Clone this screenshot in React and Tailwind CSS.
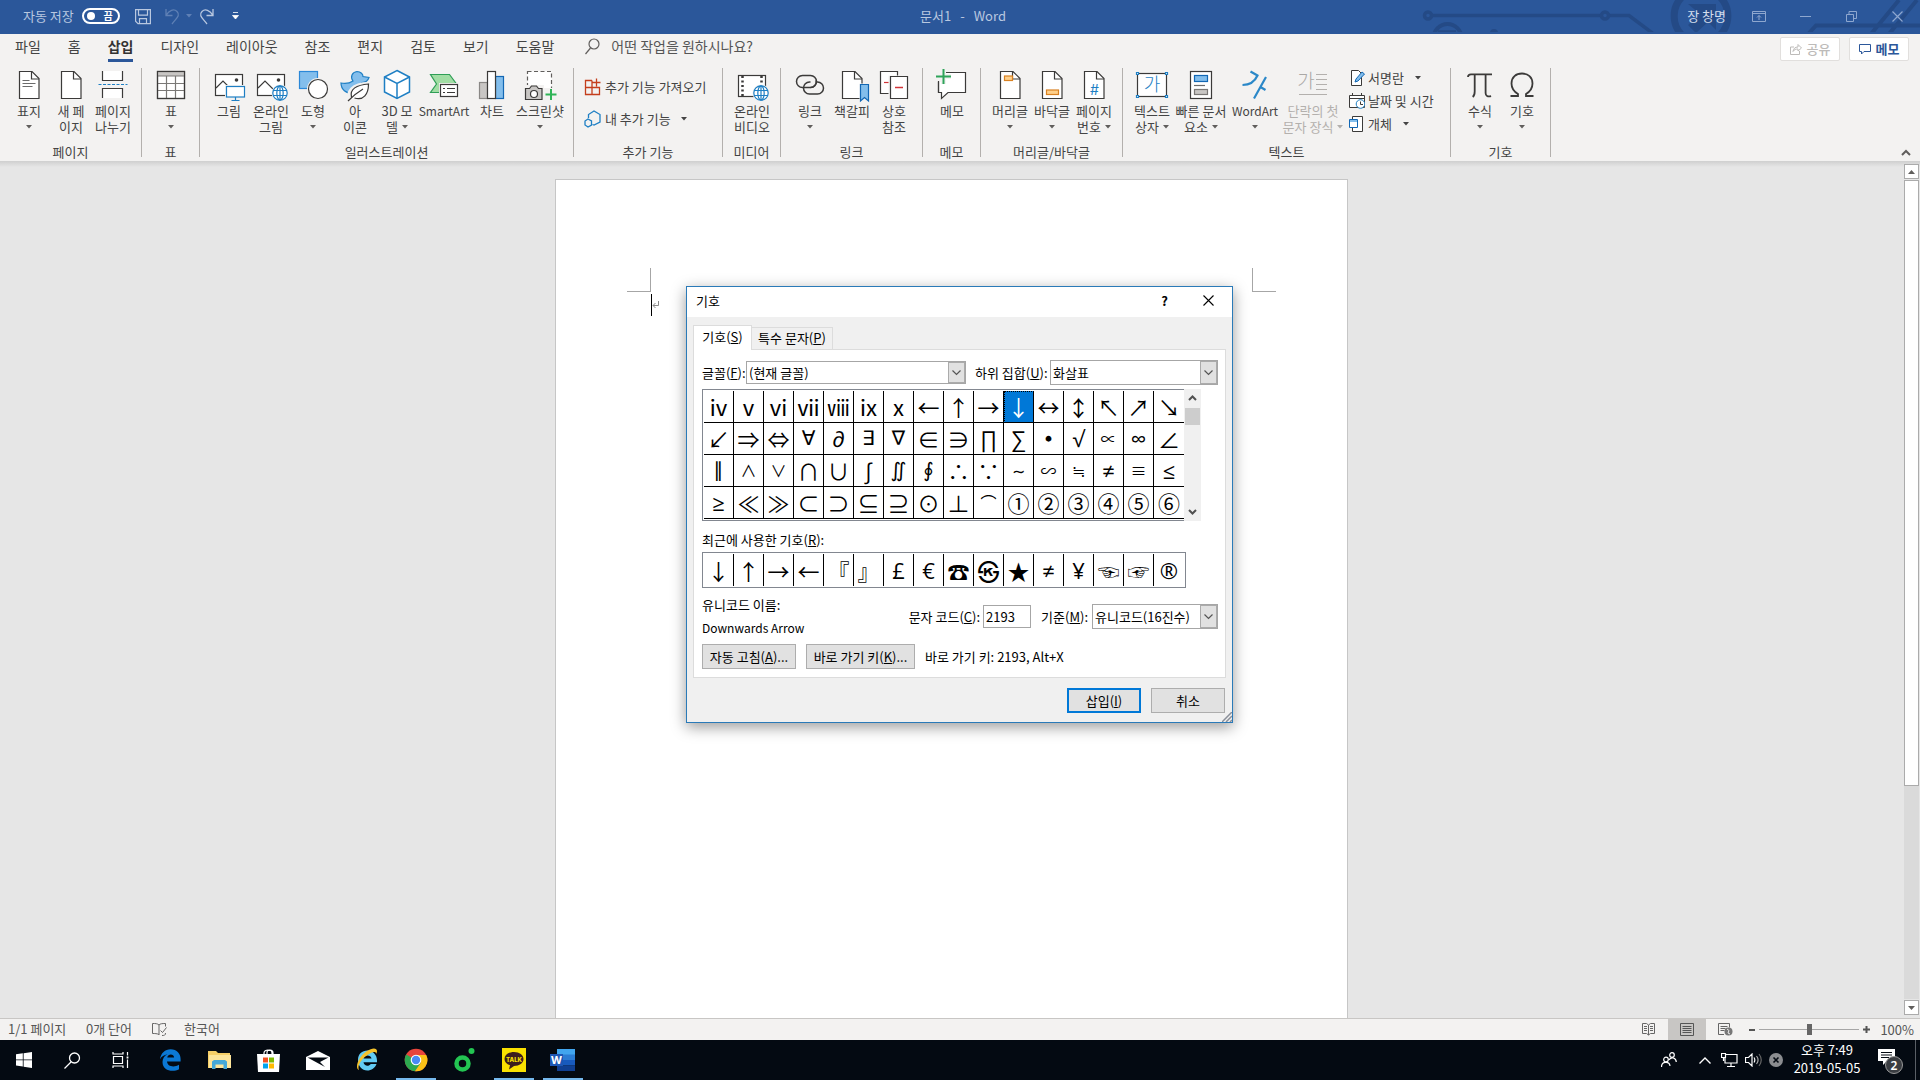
import React from "react";

const INK = "#3b3a39";
const BLUE = "#1e7fc4";

/* ---------- ribbon drawings, all on a 36 x 34 board ---------- */

function Board({ children }) {
  return (
    <svg width="36" height="34" viewBox="0 0 36 34" fill="none" stroke={INK} strokeWidth="1.2" className="shrink-0 overflow-visible" aria-hidden="true">
      {children}
    </svg>
  );
}

function Sheet() {
  return (
    <>
      <path d="M8.5 3.5h12.5l7 7v20H8.5z" fill="#fff" />
      <path d="M20.5 3.5v7.500h7.500" />
    </>
  );
}

function Globe({ x, y }) {
  return (
    <g transform={`translate(${x} ${y})`} stroke={BLUE}>
      <circle r="8.5" fill="#f3f2f1" stroke="none" />
      <circle r="7.2" fill="#fff" />
      <ellipse rx="3.2" ry="7.2" />
      <path d="M-7 -2.5H7M-7 2.5H7M0 -7V7" />
    </g>
  );
}

const CoverIcon = () => (
  <Board>
    <Sheet />
    <path d="M11.5 12.5h7M11.5 15.5h13M11.5 18.5h10" stroke="#6b6b6b" />
  </Board>
);
const BlankIcon = () => (
  <Board>
    <Sheet />
  </Board>
);
const BreakIcon = () => (
  <Board>
    <path d="M7.5 3v9.5h20V3" fill="#fff" />
    <path d="M7.5 30v-9.5h20V30" fill="#fff" />
    <path d="M3.5 16.5h29" stroke={BLUE} strokeDasharray="3 1.5" />
  </Board>
);
const TableIcon = () => (
  <Board>
    <rect x="4.5" y="3.5" width="27" height="27" fill="#fff" />
    <rect x="5" y="4" width="26" height="4" fill="#c8c6c4" stroke="none" />
    <path d="M13.5 8v22M22.5 8v22M5 8h26M5 15.5h26M5 22.5h26" stroke="#7a7876" />
    <rect x="4.5" y="3.5" width="27" height="27" />
  </Board>
);
const PictureBase = () => (
  <>
    <rect x="4.5" y="6.5" width="27" height="21" fill="#fff" />
    <path d="M5 20l7-7 13 13" />
    <circle cx="25.5" cy="12" r="1.8" fill={INK} stroke="none" />
  </>
);
const PictureIcon = () => (
  <Board>
    <PictureBase />
    <rect x="14" y="17" width="21" height="17" fill="#f3f2f1" stroke="none" />
    <rect x="15.5" y="18.5" width="18" height="10.5" fill="#fff" stroke={BLUE} />
    <path d="M24.5 29v3M20.5 32.5h8" stroke={BLUE} />
  </Board>
);
const OnlinePictureIcon = () => (
  <Board>
    <PictureBase />
    <Globe x={27} y={25} />
  </Board>
);
const ShapesIcon = () => (
  <Board>
    <rect x="4.5" y="3.5" width="18" height="17" fill="#83beec" stroke="#2b88d8" />
    <circle cx="23" cy="21" r="11" fill="#f3f2f1" stroke="none" />
    <circle cx="23" cy="21" r="9.5" fill="#fff" />
  </Board>
);
const IconsIcon = () => (
  <Board>
    <path d="M4 15c5 1 9 0 12-2-3-4-1-9 4-9.5 4 0 6 3 6 5l6 1c-1 3-4 5-7 5 2 6-2 11-9 11-7 0-12-4-12-10.500z" fill="#83beec" stroke="#1e7fc4" />
    <path d="M13 33c-3-9 2-17 19-17 1 12-6 18-15 14" fill="#fff" stroke="#f3f2f1" strokeWidth="4" />
    <path d="M11 33c6-6 10-9 15-12M14.5 29c-2-8 5-12 17-13 0 10-5 17-14 14" fill="#fff" />
  </Board>
);
const CubeIcon = () => (
  <Board>
    <path d="M18 2.5l12.5 6.5v15L18 30.5 5.5 24V9z" fill="#fff" stroke={BLUE} strokeWidth="1.5" />
    <path d="M5.5 9L18 15.5 30.5 9M18 15.5v15" stroke={BLUE} strokeWidth="1.5" />
  </Board>
);
const SmartArtIcon = () => (
  <Board>
    <path d="M4.5 6.5h19l7 9.5-7 8.5h-19l6-8.5z" fill="#a1dda4" stroke="#2f9e57" />
    <rect x="13" y="15" width="21" height="15" fill="#f3f2f1" stroke="none" />
    <rect x="14.5" y="16.5" width="17" height="12" fill="#fff" />
    <path d="M17 20.5h2M21 20.5h8M17 24.5h2M21 24.5h8" />
  </Board>
);
const ChartIcon = () => (
  <Board>
    <rect x="5.5" y="14.5" width="8" height="16" fill="#c8c6c4" stroke="#8a8886" />
    <rect x="21.5" y="8.5" width="8" height="22" fill="#83beec" stroke="#1267b4" />
    <rect x="13.5" y="3.5" width="8" height="27" fill="#fff" />
  </Board>
);
const ScreenshotIcon = () => (
  <Board>
    <rect x="5.5" y="3.5" width="24" height="26" fill="#fff" stroke="#605e5c" strokeDasharray="4 2.5" />
    <path d="M2 17h20v15H2zM22 20h13v13H22z" fill="#f3f2f1" stroke="none" />
    <path d="M3.5 20.5h4l2-2.5h5l2 2.5h3.5v11h-16.500z" fill="#c8c6c4" />
    <circle cx="12" cy="26" r="3.5" fill="#fff" />
    <path d="M29 21v11M23.5 26.5h11" stroke="#2fb457" strokeWidth="2" />
  </Board>
);
const VideoIcon = () => (
  <Board>
    <rect x="4.5" y="7.5" width="27" height="21" fill="#fff" />
    <path d="M8.5 8v20M27.5 8v20" strokeDasharray="2 2.5" strokeWidth="2.5" />
    <Globe x={27} y={25} />
  </Board>
);
const LinkIcon = () => (
  <Board>
    <rect x="4.5" y="7.5" width="20" height="12" rx="6" strokeWidth="1.5" />
    <rect x="11.5" y="14" width="20" height="12" rx="6" strokeWidth="1.5" />
    <path d="M18.5 14h5" stroke="#f3f2f1" strokeWidth="3" />
    <path d="M24.3 12c.5 4-2 7.5-5.8 7.5" strokeWidth="1.5" />
  </Board>
);
const BookmarkIcon = () => (
  <Board>
    <Sheet />
    <path d="M25.5 15.5H35V34l-4.500-3-5 3z" fill="#f3f2f1" stroke="none" />
    <path d="M26.5 16.5h8V33l-4-3.5-4 3.500z" fill="#83beec" stroke="#1267b4" />
  </Board>
);
const CrossRefIcon = () => (
  <Board>
    <path d="M4.5 3.5h17v22h-17z" fill="#fff" />
    <path d="M8 14.5h5" stroke="#d13438" />
    <path d="M12.5 7.5H34V32H12.5z" fill="#f3f2f1" stroke="none" />
    <path d="M14.5 8.5h17v22h-17z" fill="#fff" />
    <path d="M19 19.5h8" stroke="#d13438" strokeWidth="1.5" />
  </Board>
);
const CommentIcon = () => (
  <Board>
    <path d="M4.500 4.5h27v20H14l-6.500 6v-6h-3z" fill="#fff" />
    <path d="M0 0h10v14H0z" fill="#f3f2f1" stroke="none" />
    <path d="M4.500 13v11.5" />
    <path d="M9.5 1v15M2 8.5h15" stroke="#f3f2f1" strokeWidth="5" />
    <path d="M9.5 1v15M2 8.5h15" stroke="#2fa45a" strokeWidth="2" />
  </Board>
);
const HeaderIcon = () => (
  <Board>
    <Sheet />
    <rect x="12.5" y="8" width="8" height="4.5" fill="#ffd08a" stroke="#d98223" />
  </Board>
);
const FooterIcon = () => (
  <Board>
    <Sheet />
    <rect x="12.5" y="22" width="12" height="4.5" fill="#ffd08a" stroke="#d98223" />
  </Board>
);
const PageNumberIcon = () => (
  <Board>
    <Sheet />
    <text x="14" y="26.5" fontSize="14" fill={BLUE} stroke="none" fontFamily="Inter, sans-serif">#</text>
  </Board>
);
const TextBoxIcon = () => (
  <Board>
    <rect x="3.5" y="5.5" width="29" height="23" fill="#fff" />
    <g fill="#fff" stroke={BLUE}>
      <path d="M2.500 4.5h2v2h-2zM31.500 4.5h2v2h-2zM2.500 27.5h2v2h-2zM31.500 27.5h2v2h-2z" />
    </g>
    <text x="18" y="23" fontSize="18" textAnchor="middle" fill={BLUE} stroke="none" fontFamily="Noto Sans CJK KR, sans-serif" fontWeight="300">가</text>
  </Board>
);
const QuickPartsIcon = () => (
  <Board>
    <rect x="7.5" y="3.5" width="21" height="27" fill="#fff" />
    <rect x="11.5" y="7.5" width="13" height="6" fill="#83beec" stroke="#1267b4" />
    <path d="M11 17.5h11" stroke="#6b6b6b" />
    <rect x="11.5" y="21.5" width="13" height="5" fill="#c8c6c4" stroke="#7a7876" />
  </Board>
);
const WordArtIcon = () => (
  <Board>
    <path d="M13.5 3.5l7 4C18 13 13 17 5.500 17M29 9L17 30.5M23.500 19l5 3" stroke="#2b88c8" strokeWidth="2.2" />
  </Board>
);
const DropCapIcon = () => (
  <Board>
    <text x="11" y="20" fontSize="19" textAnchor="middle" fill="#aaa8a6" stroke="none" fontFamily="Noto Sans CJK KR, sans-serif" fontWeight="300">가</text>
    <path d="M21 6.5h11M21 11.5h11M21 16.5h11M21 21.5h11M4 26.5h28" stroke="#b3b0ad" />
  </Board>
);
const PiIcon = () => (
  <Board>
    <path d="M6 9c0-2 1-2.700 3-2.700h21M12.700 6.500v17c0 3-.7 4.500-2 5.500M23.600 6.500V25c0 3 2 4 5.500 3.200" strokeWidth="1.8" />
  </Board>
);
const OmegaIcon = () => (
  <Board>
    <path d="M6.500 28h7.500v-2C9 23 7.500 19.500 7.500 15.500 7.500 9 12 5.500 18 5.500S28.500 9 28.500 15.500c0 4-1.500 7.500-6.500 10.500v2h7.500" strokeWidth="1.8" />
  </Board>
);

/* ---------- small shared parts ---------- */

function Caret({ className = "" }) {
  return (
    <svg width="6" height="4" viewBox="0 0 6 4" className={"inline-block shrink-0 " + className} aria-hidden="true">
      <path d="M0 0h6L3 3.500z" fill="currentColor" />
    </svg>
  );
}

function Group({ label, children, tight }) {
  return (
    <section className="flex flex-col justify-between border-r border-[#b3b0ad]">
      <div className={tight ? "flex" : "flex pl-2 pr-[7px]"}>{children}</div>
      <h2 className="-mb-[3px] text-center text-[13px] leading-4 text-[#444]">{label}</h2>
    </section>
  );
}

function Big({ icon, lines, caret, width = "w-[42px]", size = "text-[13px]", disabled }) {
  return (
    <button disabled={disabled} className={"flex shrink-0 flex-col items-center whitespace-nowrap leading-4 " + size + " " + width + (disabled ? " text-[#b3b0ad]" : " text-[#444]")}>
      {icon}
      <span className="pt-px leading-4">{lines[0]}</span>
      <span className="flex h-4 items-center gap-1 leading-4">
        {lines[1]}
        {caret && <Caret className={disabled ? "" : "text-[#605e5c]"} />}
      </span>
    </button>
  );
}

function TitleBar() {
  return (
    <header className="relative flex h-[34px] shrink-0 items-center justify-between bg-[#2b579a] pb-[2px] text-[13px] text-[#b9c8e0]">
      <svg className="absolute right-0 top-0" width="500" height="32" viewBox="1420 0 500 32" fill="none" stroke="#244a86" strokeWidth="3.5" aria-hidden="true">
        <circle cx="1428" cy="15.5" r="3.5" />
        <path d="M1432 15.5h169M1609 15.5h20l24 18" />
        <circle cx="1605" cy="15.5" r="3.5" />
        <circle cx="1447.5" cy="38" r="14" strokeWidth="4" />
        <path d="M1438 32h18" />
        <circle cx="1494" cy="33" r="4" fill="#244a86" stroke="none" />
        <path d="M1683 -4a27 27 0 0 0 0 40M1719 -4a27 27 0 0 1 0 40" strokeWidth="7" />
        <path d="M1688 4h28v26l-8-8-12 11-8-8 12-11z" fill="#244a86" stroke="none" />
        <path d="M1809 33l7-7.5h104M1871 34l28-34M1889 34l28-34" strokeWidth="4" />
      </svg>
      <div className="relative flex flex-1 items-center pl-[23px]">
        <span>자동 저장</span>
        <button role="switch" aria-checked="false" aria-label="자동 저장" className="ml-2 flex h-4 w-[38px] items-center justify-between rounded-full border-2 border-white pl-[3px] pr-[5px] text-[10px] font-bold leading-3 text-white">
          <span className="size-2 rounded-full bg-white" />
          <span>끔</span>
        </button>
        <button aria-label="저장" className="ml-[15px]">
          <svg width="16" height="17" viewBox="0 0 16 17" fill="none" stroke="currentColor" strokeWidth="1.2">
            <path d="M.6 1.6h14.800v14H3l-2.400-2.400zM3.500 1.600v5.500h9V1.600M4.500 15.600v-5h7v5" />
          </svg>
        </button>
        <button aria-label="실행 취소" className="ml-[14px] flex items-center gap-[6px] text-[#5f80b5]">
          <svg width="15" height="17" viewBox="0 0 15 17" fill="none" stroke="currentColor" strokeWidth="1.3">
            <path d="M1 1v6.500h6.500M1 7.500C4 2 9 .5 12 3.500c4 4-1 7-5 12.500" />
          </svg>
          <Caret />
        </button>
        <button aria-label="다시 실행" className="ml-[7px]">
          <svg width="15" height="17" viewBox="0 0 15 17" fill="none" stroke="currentColor" strokeWidth="1.3">
            <path d="M14 1v6.500H7.500M14 7.500C11 2 6 .5 3 3.500c-4 4 1 7 5 12.500" />
          </svg>
        </button>
        <button aria-label="빠른 실행 도구 모음 사용자 지정" className="ml-[18px] text-white">
          <svg width="7" height="8" viewBox="0 0 7 8">
            <path d="M1 .5h5M.5 3.500h6L3.500 7z" fill="currentColor" stroke="currentColor" strokeWidth=".8" />
          </svg>
        </button>
      </div>
      <h1 className="relative flex gap-[9px]"><span>문서1</span><span>-</span><span>Word</span></h1>
      <div className="relative flex flex-1 items-center justify-end pr-[17px]">
        <span className="text-[#d3ddec]">장 창명</span>
        <button aria-label="리본 메뉴 표시 옵션" className="ml-[26px]">
          <svg width="14" height="11" viewBox="0 0 14 11" fill="none" stroke="#8ea7cf">
            <path d="M.5.5h13v10H.5zM.5 2.500h13M7 9V4.500M5 6.500l2-2 2 2" />
          </svg>
        </button>
        <button aria-label="최소화" className="ml-[34px]">
          <svg width="11" height="11" viewBox="0 0 11 11" stroke="#8ea7cf"><path d="M0 5.500h11" /></svg>
        </button>
        <button aria-label="이전 크기로 복원" className="ml-[35px]">
          <svg width="11" height="11" viewBox="0 0 11 11" fill="none" stroke="#8ea7cf"><path d="M.5 3.500h7v7h-7zM3 3.500v-3h7.500v7H8" /></svg>
        </button>
        <button aria-label="닫기" className="ml-[35px]">
          <svg width="11" height="11" viewBox="0 0 11 11" stroke="#8ea7cf" strokeWidth="1.2"><path d="M.5.5l10 10M10.5.5l-10 10" /></svg>
        </button>
      </div>
    </header>
  );
}

const TABS = ["파일", "홈", "삽입", "디자인", "레이아웃", "참조", "편지", "검토", "보기", "도움말"];

function TabRow() {
  return (
    <nav className="flex h-[34px] items-start justify-between pl-[15px] pr-[11px] text-[14px] text-[#444]">
      <div className="flex items-start gap-[27px]">
        {TABS.map((t) => (
          <button key={t} className={"h-7 pt-0.5 leading-5 " + (t === "삽입" ? "border-b-3 border-[#2b579a] pb-[3px] font-bold text-[#333]" : "pb-1.5")}>
            {t}
          </button>
        ))}
        <label className="flex items-center gap-[11px] pt-0.5">
          <svg width="15" height="17" viewBox="0 0 15 17" fill="none" stroke="#605e5c" strokeWidth="1.2" className="ml-1" aria-hidden="true">
            <circle cx="9" cy="6" r="5" />
            <path d="M5.500 10L.5 16" />
          </svg>
          <input placeholder="어떤 작업을 원하시나요?" aria-label="어떤 작업을 원하시나요?" className="h-5 w-[180px] bg-transparent outline-none placeholder:text-[#555]" />
        </label>
      </div>
      <div className="flex gap-[9px] pt-[3px] text-[13px] font-bold">
        <button disabled className="flex h-6 w-[60px] items-center justify-center gap-[5px] rounded-xs border border-[#e1dfdd] bg-white font-medium text-[#bdbbb9]">
          <svg width="12" height="12" viewBox="0 0 12 12" fill="none" stroke="currentColor" aria-hidden="true">
            <path d="M4 4H.5v7.500h9V8M3 8.500c.5-3 2-4.500 5-4.500V1.500l3.500 3.500L8 8V6c-2 0-4 .5-5 2.500z" />
          </svg>
          공유
        </button>
        <button className="flex h-6 w-[60px] items-center justify-center gap-[5px] rounded-xs border border-[#e1dfdd] bg-white text-[#2b579a]">
          <svg width="12" height="12" viewBox="0 0 12 12" fill="none" stroke="currentColor" aria-hidden="true">
            <path d="M.5 1.500h11v7H5l-2.500 2.500V8.500h-2z" />
          </svg>
          메모
        </button>
      </div>
    </nav>
  );
}

function Ribbon() {
  return (
    <div className="flex h-[93px] items-end pr-2 text-[#444]">
      <div className="flex h-[93px] flex-1 pb-1">
        <Group label="페이지">
          <Big icon={<CoverIcon />} lines={["표지", ""]} caret />
          <Big icon={<BlankIcon />} lines={["새 페", "이지"]} />
          <Big icon={<BreakIcon />} lines={["페이지", "나누기"]} />
        </Group>
        <Group label="표">
          <Big icon={<TableIcon />} lines={["표", ""]} caret />
        </Group>
        <Group label="일러스트레이션">
          <Big icon={<PictureIcon />} lines={["그림", ""]} />
          <Big icon={<OnlinePictureIcon />} lines={["온라인", "그림"]} />
          <Big icon={<ShapesIcon />} lines={["도형", ""]} caret />
          <Big icon={<IconsIcon />} lines={["아", "이콘"]} />
          <Big icon={<CubeIcon />} lines={["3D 모", "델"]} caret />
          <Big icon={<SmartArtIcon />} lines={["SmartArt", ""]} width="w-[52px]" size="text-[12px]" />
          <Big icon={<ChartIcon />} lines={["차트", ""]} width="w-[44px]" />
          <Big icon={<ScreenshotIcon />} lines={["스크린샷", ""]} caret width="w-[52px]" />
        </Group>
        <Group label="추가 기능" tight>
          <div className="flex w-[148px] flex-col items-start gap-[14px] pl-[10px] pt-[10px] text-[13px] leading-4">
            <button className="flex items-center gap-1 whitespace-nowrap">
              <svg width="17" height="18" viewBox="0 0 17 18" fill="none" stroke="#c43e1c" strokeWidth="1.3" aria-hidden="true">
                <path d="M8 2.500H1.500v14h14V9.500H1.500M8 2.500v14M12.500 .5v8M8.500 4.500h8" />
              </svg>
              추가 기능 가져오기
            </button>
            <button className="flex items-center gap-1 whitespace-nowrap">
              <svg width="17" height="18" viewBox="0 0 17 18" fill="none" stroke={BLUE} strokeWidth="1.3" aria-hidden="true">
                <path d="M4.500 8V4.500L10 1l6 3.500v7.500L10 15l-1.500-.5M4 9l3.500 2v4L4 17l-3-2v-4z" />
              </svg>
              내 추가 기능
              <Caret className="ml-1.5" />
            </button>
          </div>
        </Group>
        <Group label="미디어">
          <Big icon={<VideoIcon />} lines={["온라인", "비디오"]} />
        </Group>
        <Group label="링크">
          <Big icon={<LinkIcon />} lines={["링크", ""]} caret />
          <Big icon={<BookmarkIcon />} lines={["책갈피", ""]} />
          <Big icon={<CrossRefIcon />} lines={["상호", "참조"]} />
        </Group>
        <Group label="메모">
          <Big icon={<CommentIcon />} lines={["메모", ""]} />
        </Group>
        <Group label="머리글/바닥글">
          <Big icon={<HeaderIcon />} lines={["머리글", ""]} caret />
          <Big icon={<FooterIcon />} lines={["바닥글", ""]} caret />
          <Big icon={<PageNumberIcon />} lines={["페이지", "번호"]} caret />
        </Group>
        <Group label="텍스트">
          <Big icon={<TextBoxIcon />} lines={["텍스트", "상자"]} caret />
          <Big icon={<QuickPartsIcon />} lines={["빠른 문서", "요소"]} caret width="w-[56px]" />
          <Big icon={<WordArtIcon />} lines={["WordArt", ""]} caret width="w-[52px]" size="text-[12px]" />
          <Big icon={<DropCapIcon />} lines={["단락의 첫", "문자 장식"]} caret disabled width="w-[64px]" />
          <div className="flex w-[98px] flex-col items-start gap-[7px] pl-1 pt-[2px] text-[13px] leading-4">
            <button className="flex items-center gap-[3px] whitespace-nowrap">
              <svg width="16" height="16" viewBox="0 0 16 16" fill="none" stroke={INK} aria-hidden="true">
                <path d="M2.500.5h7l3 3v12h-10z" fill="#fff" />
                <path d="M6 12l1-3 6-7 2.500 2-6.500 7z" fill="#83beec" stroke="#1267b4" />
              </svg>
              서명란
              <Caret className="ml-2" />
            </button>
            <button className="flex items-center gap-[3px] whitespace-nowrap">
              <svg width="16" height="16" viewBox="0 0 16 16" fill="none" stroke={INK} aria-hidden="true">
                <path d="M.5 2.500h15v12H.5zM.5 5.500h15M3.500 0v3M12.500 0v3" fill="#fff" />
                <circle cx="11.5" cy="11" r="4.3" fill="#fff" stroke={BLUE} />
                <path d="M11.500 8.500v3h2.500" />
              </svg>
              날짜 및 시간
            </button>
            <button className="flex items-center gap-[3px] whitespace-nowrap">
              <svg width="16" height="16" viewBox="0 0 16 16" fill="none" stroke={INK} aria-hidden="true">
                <path d="M3.500.5h10v15h-10z" fill="#fff" />
                <path d="M.5 3.500h8v8h-8z" fill="#fff" stroke="#1267b4" />
                <path d="M1 4h7v2H1z" fill="#83beec" stroke="none" />
              </svg>
              개체
              <Caret className="ml-2" />
            </button>
          </div>
        </Group>
        <Group label="기호">
          <Big icon={<PiIcon />} lines={["수식", ""]} caret />
          <Big icon={<OmegaIcon />} lines={["기호", ""]} caret />
        </Group>
      </div>
      <button aria-label="리본 메뉴 축소" className="pb-[5px] text-[#605e5c]">
        <svg width="12" height="7" viewBox="0 0 12 7" fill="none" stroke="currentColor" strokeWidth="2"><path d="M2 6l4-4 4 4" /></svg>
      </button>
    </div>
  );
}

/* ---------- document area ---------- */

function DocumentArea() {
  return (
    <main className="flex min-h-0 flex-1 bg-[linear-gradient(#cfcfcf,#e6e6e6_6px)]">
      <div className="flex min-w-0 flex-1 justify-center pt-[18px]">
        <div className="flex w-[793px] flex-col border border-b-0 border-[#c6c6c6] bg-white px-[71px] pt-[88px]">
          <div className="flex justify-between">
            <div className="size-6 border-b border-r border-[#a6a6a6]" />
            <div className="size-6 border-b border-l border-[#a6a6a6]" />
          </div>
          <div className="flex items-center pl-6 pt-0.5">
            <span className="h-[22px] w-px bg-black" />
            <svg width="7" height="8" viewBox="0 0 7 8" fill="none" stroke="#8a8a8a" aria-hidden="true">
              <path d="M6.500 0v4.500H1M3.500 2L1 4.500 3.500 7" />
            </svg>
          </div>
        </div>
      </div>
      <div className="flex w-[17px] flex-col items-center gap-px py-[3px]">
        <button aria-label="위로 스크롤" className="flex h-[15px] w-[15px] items-center justify-center border border-[#ababab] bg-white">
          <svg width="7" height="4" viewBox="0 0 7 4"><path d="M0 4h7L3.500 0z" fill="#605e5c" /></svg>
        </button>
        <div className="flex w-[15px] flex-1 flex-col bg-[#dadada]">
          <div className="h-[74%] border border-[#ababab] bg-white" />
        </div>
        <button aria-label="아래로 스크롤" className="flex h-[15px] w-[15px] items-center justify-center border border-[#ababab] bg-white">
          <svg width="7" height="4" viewBox="0 0 7 4"><path d="M0 0h7L3.500 4z" fill="#605e5c" /></svg>
        </button>
      </div>
    </main>
  );
}

/* ---------- symbol dialog ---------- */

const SYMBOLS = [..."ⅳⅴⅵⅶⅷⅸⅹ←↑→↓↔↕↖↗↘↙⇒⇔∀∂∃∇∈∋∏∑∙√∝∞∠∥∧∨∩∪∫∬∮∴∵∼∽≒≠≡≤≥≪≫⊂⊃⊆⊇⊙⊥⌒①②③④⑤⑥"];
const RECENT = [..."↓↑→←『』£€☎㉿★≠¥☜☞®"];

function glyphStyle(s) {
  if ("∂∏∑√∞≠≤≥∫£€¥®".includes(s)) return "font-['Open_Sans','Noto_Sans_CJK_KR',sans-serif] text-[22px]";
  if ("∀∃∇∥∬∮∙".includes(s)) return "font-['DejaVu_Sans','Noto_Sans_CJK_KR',sans-serif] text-[20px]";
  if ("∧∨≡∼∽∝⌒≒".includes(s)) return "text-[16px]";
  return "text-[22px]";
}

function DropBox({ id, value, size }) {
  return (
    <div className={"relative flex border border-[#a6a6a6] " + size}>
      <select id={id} defaultValue={value} className="min-w-0 flex-1 appearance-none bg-white pl-[2px] pr-[17px] text-[13px] leading-4 outline-none">
        <option>{value}</option>
      </select>
      <span className="pointer-events-none absolute inset-y-0 right-0 flex w-[17px] items-center justify-center border border-[#ababab] bg-[#e1e1e1]">
        <svg width="9" height="6" viewBox="0 0 9 6" fill="none" stroke="#555" strokeWidth="1.2"><path d="M.5.5l4 4 4-4" /></svg>
      </span>
    </div>
  );
}

function DialogButton({ children, className = "" }) {
  return <button className={"h-[25px] whitespace-nowrap bg-[#e1e1e1] leading-4 " + className}>{children}</button>;
}

function SymbolDialog() {
  return (
    <div className="pointer-events-none absolute inset-x-0 top-[286px] flex justify-center pr-px">
      <div role="dialog" aria-label="기호" className="pointer-events-auto relative flex w-[547px] flex-col border border-[#2a7ab8] bg-[#f0f0f0] text-[13px] leading-4 text-black shadow-[0_4px_14px_rgba(0,0,0,0.4)]">
        <div className="flex h-[30px] items-center bg-white pb-[3px] pl-[9px] pr-[18px]">
          <span className="flex-1">기호</span>
          <button aria-label="도움말" className="font-bold">?</button>
          <button aria-label="닫기" className="ml-[35px]">
            <svg width="11" height="11" viewBox="0 0 11 11" stroke="#000" strokeWidth="1.1"><path d="M.5.5l10 10M10.5.5l-10 10" /></svg>
          </button>
        </div>

        <div className="flex flex-col px-[6px] pt-2">
          <div role="tablist" className="flex items-end">
            <button role="tab" aria-selected="true" className="relative z-10 -mb-px h-[25px] w-[59px] border border-b-0 border-[#dcdcdc] bg-white pb-0.5">기호(<u>S</u>)</button>
            <button role="tab" aria-selected="false" className="h-[22px] w-[81px] border border-b-0 border-l-0 border-[#dcdcdc] bg-[#f0f0f0] pb-0.5">특수 문자(<u>P</u>)</button>
          </div>
          <div className="flex flex-col border border-[#dcdcdc] bg-white pb-2 pl-2 pr-[7px] pt-[10px]">
            <div className="flex items-center">
              <label htmlFor="font" className="w-[44px] whitespace-nowrap">글꼴(<u>F</u>):</label>
              <DropBox id="font" value="(현재 글꼴)" size="h-[23px] w-[220px]" />
              <label htmlFor="subset" className="ml-[9px] flex-1 whitespace-nowrap">하위 집합(<u>U</u>):</label>
              <DropBox id="subset" value="화살표" size="h-[25px] w-[168px]" />
            </div>

            <div className="mt-1 flex">
              <div className="grid grid-cols-[repeat(16,30px)] border-y border-l border-[#828790] pb-px pl-px pt-px">
                {SYMBOLS.map((s, i) => (
                  <button
                    key={s}
                    className={
                      "flex h-8 items-center justify-center border-b border-black leading-[31px] " +
                      glyphStyle(s) +
                      (s === "↓" ? " bg-[#0078d7] text-white outline-1 -outline-offset-1 outline-dotted outline-black" : "") +
                      (i % 16 === 15 ? "" : " border-r")
                    }
                  >
                    {s}
                  </button>
                ))}
              </div>
              <div className="flex w-[17px] flex-col items-center bg-[#f0f0f0] py-1.5">
                <svg width="9" height="6" viewBox="0 0 9 6" fill="none" stroke="#505050" strokeWidth="2"><path d="M1 5l3.500-3.500L8 5" /></svg>
                <span className="mt-[7px] h-[17px] w-[15px] bg-[#cdcdcd]" />
                <span className="flex-1" />
                <svg width="9" height="6" viewBox="0 0 9 6" fill="none" stroke="#505050" strokeWidth="2"><path d="M1 1l3.500 3.500L8 1" /></svg>
              </div>
            </div>

            <p className="mt-[11px]">최근에 사용한 기호(<u>R</u>):</p>
            <div className="mt-1 grid w-fit grid-cols-[repeat(16,30px)] border border-[#828790] py-px pl-px pr-px">
              {RECENT.map((s, i) => (
                <button key={s} className={"flex h-8 items-center justify-center border-black leading-8 " + glyphStyle(s) + (i < 15 ? " border-r" : "")}>
                  {s}
                </button>
              ))}
            </div>

            <div className="mt-[9px] flex items-center">
              <div className="flex flex-1 flex-col gap-[7px]">
                <span>유니코드 이름:</span>
                <span className="text-[12px]">Downwards Arrow</span>
              </div>
              <label htmlFor="code" className="whitespace-nowrap">문자 코드(<u>C</u>):</label>
              <input id="code" defaultValue="2193" className="ml-[3px] h-[23px] w-12 border border-[#a6a6a6] pl-0.5 outline-none" />
              <label htmlFor="base" className="ml-[10px] whitespace-nowrap">기준(<u>M</u>):</label>
              <span className="w-1" />
              <DropBox id="base" value="유니코드(16진수)" size="h-[25px] w-[126px]" />
            </div>

            <div className="mt-2 flex items-center gap-[10px]">
              <DialogButton className="w-[94px] border border-[#adadad]">자동 고침(<u>A</u>)...</DialogButton>
              <DialogButton className="w-[109px] border border-[#adadad]">바로 가기 키(<u>K</u>)...</DialogButton>
              <span>바로 가기 키: 2193, Alt+X</span>
            </div>
          </div>
        </div>

        <div className="flex justify-end gap-[10px] pb-[9px] pr-[7px] pt-[10px]">
          <DialogButton className="w-[74px] border-2 border-[#0078d7]">삽입(<u>I</u>)</DialogButton>
          <DialogButton className="w-[74px] border border-[#adadad]">취소</DialogButton>
        </div>
        <svg className="absolute bottom-0 right-0" width="10" height="10" viewBox="0 0 10 10" stroke="#8a8f99" strokeWidth="1.5" aria-hidden="true">
          <path d="M0 10L10 0M4 10l6-6M8 10l2-2" />
        </svg>
      </div>
    </div>
  );
}

/* ---------- status bar ---------- */

function StatusBar() {
  return (
    <footer className="flex h-[22px] shrink-0 items-center border-t border-[#c8c6c4] bg-[#f3f2f1] pl-2 pr-1.5 text-[13px] leading-5 text-[#555]">
      <span className="w-[78px] pb-0.5">1/1 페이지</span>
      <span className="w-[66px] pb-0.5">0개 단어</span>
      <svg width="15" height="13" viewBox="0 0 15 13" fill="none" stroke="#666" aria-hidden="true">
        <path d="M7 11.500c-2-1-4-1-6.500-1V.5c3 0 5 0 6.500 1.500C8 .7 10 .5 13.500.5v3M7 2v10M10 12.500c2 0 3.500 0 3.500-2.500M8.500 7.500l2 2 4-5" />
      </svg>
      <span className="ml-[17px] flex-1 pb-0.5">한국어</span>
      <button aria-label="읽기 모드" className="mr-[13px]">
        <svg width="13" height="13" viewBox="0 0 13 13" fill="none" stroke="#666" aria-hidden="true">
          <path d="M.5.5h4l2 1.500 2-1.500h4v10h-4l-2 1.500-2-1.500h-4zM6.500 2v10M2 3.500h3M2 5.500h3M2 7.500h3M8 3.500h3M8 5.500h3M8 7.500h3" />
        </svg>
      </button>
      <button aria-label="인쇄 모양" className="flex h-[21px] w-[38px] items-center justify-center bg-[#c8c6c4]">
        <svg width="14" height="13" viewBox="0 0 14 13" fill="none" stroke="#555" aria-hidden="true">
          <path d="M.5.5h13v12H.5zM2.500 3.500h9M2.500 5.500h9M2.500 7.500h9M2.500 9.500h9" />
        </svg>
      </button>
      <button aria-label="웹 모양" className="ml-3 mr-4">
        <svg width="15" height="13" viewBox="0 0 15 13" fill="none" stroke="#666" aria-hidden="true">
          <path d="M6 11.500H.5V.5h11v4M2.500 3.500h7M2.500 5.500h5M2.500 7.500h4" />
          <circle cx="10.5" cy="8.5" r="4" fill="#777" stroke="none" />
          <path d="M9 6l2 1.500-1 2.500 2 1" stroke="#eee" />
        </svg>
      </button>
      <button aria-label="축소" className="h-[2px] w-[6px] bg-[#555]" />
      <input
        type="range"
        aria-label="확대/축소"
        defaultValue="50"
        className="mx-1 h-[11px] w-[100px] appearance-none bg-[linear-gradient(#a6a6a6,#a6a6a6)] bg-[length:100%_1px] bg-center bg-no-repeat [&::-webkit-slider-thumb]:h-[11px] [&::-webkit-slider-thumb]:w-[5px] [&::-webkit-slider-thumb]:appearance-none [&::-webkit-slider-thumb]:bg-[#666]"
      />
      <button aria-label="확대">
        <svg width="7" height="7" viewBox="0 0 7 7" stroke="#555" strokeWidth="2" aria-hidden="true"><path d="M0 3.500h7M3.500 0v7" /></svg>
      </button>
      <span className="ml-[10px]">100%</span>
    </footer>
  );
}

/* ---------- taskbar ---------- */

function TaskButton({ label, open, width = "w-[49px]", children }) {
  return (
    <button aria-label={label} className={"flex h-10 flex-col items-center justify-between " + width}>
      <span className="flex flex-1 items-center justify-center pt-0.5">{children}</span>
      <span className={"h-0.5 w-10 " + (open ? "bg-[#76b9ed]" : "")} />
    </button>
  );
}

function Taskbar() {
  return (
    <div className="flex h-10 shrink-0 items-center justify-between bg-[#040a12] text-white">
      <div className="flex">
        <TaskButton label="시작" width="w-12">
          <svg width="16" height="16" viewBox="0 0 16 16" fill="#fff"><path d="M0 2.300l6.800-1v6.200H0zM7.600 1.200L16 0v7.500H7.600zM0 8.300h6.800v6.200l-6.800-1zM7.600 8.300H16V16l-8.400-1.200z" /></svg>
        </TaskButton>
        <TaskButton label="검색" width="w-12">
          <svg width="17" height="17" viewBox="0 0 17 17" fill="none" stroke="#fff" strokeWidth="1.3"><circle cx="10.5" cy="6" r="5" /><path d="M7 10L.5 16.500" /></svg>
        </TaskButton>
        <TaskButton label="작업 보기" width="w-[50px]">
          <svg width="18" height="16" viewBox="0 0 18 16" fill="none" stroke="#fff" strokeWidth="1.2"><path d="M1.500 4.500h9v7h-9zM1 0v2h10V0M1 16v-2h10v2M15.500 0v16" /><path d="M14 4h3v3h-3z" fill="#fff" stroke="#040a12" /></svg>
        </TaskButton>
        <TaskButton label="Edge">
          <svg width="21" height="22" viewBox="0 0 21 22"><path d="M0 10.200C1 4 5 .3 10.600.3 17 .3 20.600 5 20.600 10v2.600H7c.3 5 7 6.300 12 3.200v4.400C13 23.500 2.500 22 2.500 13c0-3.500 2-6.300 5-7.700C4 6 1.500 7.500 0 10.200zM7.200 8.500h6.900C14 4.500 8 4.200 7.200 8.500z" fill="#0b78d4" /></svg>
        </TaskButton>
        <TaskButton label="파일 탐색기">
          <svg width="23" height="20" viewBox="0 0 23 20"><path d="M0 1h8l2 2h12v15H0z" fill="#f6cf67" /><path d="M1 5h22v13H1z" fill="#fde59a" /><path d="M4 19v-7.500L6 10h11l2 1.500V19h-3.500v-4.500h-8V19z" fill="#45a9d8" /></svg>
        </TaskButton>
        <TaskButton label="Store">
          <svg width="23" height="26" viewBox="0 -2 23 26"><path d="M7 7V4c0-4 8-4 8 0v3M10 7V3.500c0-3.500 6-3 6 .5v3" fill="none" stroke="#fff" strokeWidth="1.2" /><path d="M0 5h23l-1 18H1z" fill="#fff" /><path d="M6 8.500h5v5H6z" fill="#f25022" /><path d="M12 8.500h5v5h-5z" fill="#7fba00" /><path d="M6 14.500h5v5H6z" fill="#00a4ef" /><path d="M12 14.500h5v5h-5z" fill="#ffb900" /></svg>
        </TaskButton>
        <TaskButton label="메일">
          <svg width="24" height="19" viewBox="0 0 24 19"><path d="M0 6L12 0l12 6v13H0z" fill="#fff" /><path d="M1.500 6.500h21L14 11l5 5z" fill="#040a12" /></svg>
        </TaskButton>
        <TaskButton label="Internet Explorer">
          <svg width="24" height="24" viewBox="0 0 24 24"><path d="M3 12C3 6 7 2.500 12.500 2.500S22 7 22 12.500v1.800H8.500c.5 4 5.500 4.500 7.200 1.700h5.800c-1.500 4-5 6.500-9.300 6.500C7 22.500 3 18 3 12zm5.500-1.500h8c-.5-4-7.500-4-8 0z" fill="#62cbf3" /><path d="M4 22c-5-2 0-14 8-19 5-3.500 10-3.500 10 0 0 1-.3 2-.8 3 0-3-4-2.500-8 .5C6 11 2 18 4 22z" fill="#f5c32c" /></svg>
        </TaskButton>
        <TaskButton label="Chrome" open>
          <svg width="24" height="24" viewBox="0 0 24 24"><circle cx="12" cy="12" r="11.3" fill="#e8453c" /><path d="M2.200 6.400A11.300 11.300 0 0 0 11 23.300l6-8.300-5-3z" fill="#2da94f" /><path d="M12 7h10.200A11.300 11.300 0 0 1 11 23.300L17 14.500z" fill="#fbc116" /><circle cx="12" cy="12" r="5.3" fill="#fff" /><circle cx="12" cy="12" r="4.2" fill="#4a8af4" /></svg>
        </TaskButton>
        <TaskButton label="음악">
          <svg width="21" height="26" viewBox="0 0 21 26"><circle cx="8.500" cy="16.500" r="6" fill="none" stroke="#23c552" strokeWidth="4.5" /><circle cx="17.5" cy="4" r="3" fill="#23c552" /></svg>
        </TaskButton>
        <TaskButton label="카카오톡" open>
          <svg width="24" height="24" viewBox="0 0 24 24"><path d="M0 0h24v24H0z" fill="#fae100" /><path d="M12 4c5.500 0 9.500 3 9.500 7s-4 7-9.500 7l-5 3.500 1-4.300C4.500 16 2.500 14 2.500 11 2.500 7 6.500 4 12 4z" fill="#3c1e1e" /><text x="12" y="13.500" textAnchor="middle" fontSize="6" fontWeight="800" fontFamily="Inter, sans-serif" fill="#fae100">TALK</text></svg>
        </TaskButton>
        <TaskButton label="Word" open>
          <svg width="25" height="22" viewBox="0 0 25 22"><path d="M7 0h18v6H7z" fill="#41a5ee" /><path d="M7 5.500h18V11H7z" fill="#2b7cd3" /><path d="M7 11h18v5.500H7z" fill="#185abd" /><path d="M7 16.500h18V22H7z" fill="#103f91" /><path d="M0 5h13v12H0z" fill="#1d57b5" /><text x="6.5" y="15" textAnchor="middle" fontSize="11" fontWeight="700" fontFamily="Inter, sans-serif" fill="#fff">W</text></svg>
        </TaskButton>
      </div>

      <div className="flex h-10 items-center">
        <svg width="16" height="16" viewBox="0 0 16 16" fill="none" stroke="#fff" strokeWidth="1.2" aria-hidden="true"><circle cx="5" cy="7.500" r="2.3" /><path d="M.5 15c0-6 8-6 8.500-1" /><circle cx="11" cy="3" r="2.3" /><path d="M8 8c2-3.500 7-2.500 7.300 2" /></svg>
        <svg width="12" height="7" viewBox="0 0 12 7" fill="none" stroke="#fff" strokeWidth="1.4" className="ml-[22px]" aria-hidden="true"><path d="M.5 6.500L6 1l5.500 5.500" /></svg>
        <svg width="17" height="14" viewBox="0 0 17 14" fill="none" stroke="#fff" strokeWidth="1.2" className="ml-[10px]" aria-hidden="true"><path d="M5 1.500h11v8.500H4V5M10 10v3M6 13.500h8M.5.5h4v4h-4zM2.500 4.500V8" /></svg>
        <svg width="17" height="14" viewBox="0 0 17 14" fill="none" stroke="#fff" strokeWidth="1.2" className="ml-[7px]" aria-hidden="true"><path d="M.5 4.500h3L7 1v12L3.500 9.500h-3zM9 4.500c1 1.500 1 3.500 0 5" /><path d="M11.500 3c2 2.500 2 5.500 0 8" stroke="#aaa" /><path d="M14 1c3 4 3 8 0 12" stroke="#666" /></svg>
        <svg width="14" height="14" viewBox="0 0 14 14" className="ml-[7px]" aria-hidden="true"><circle cx="7" cy="7" r="7" fill="#8b8d90" /><path d="M4.500 4.500l5 5M9.500 4.500l-5 5" stroke="#040a12" strokeWidth="1.6" /></svg>
        <div className="ml-[10px] w-[68px] pb-0.5 text-center text-[13px] leading-[18px]">
          <div>오후 7:49</div>
          <div className="whitespace-nowrap">2019-05-05</div>
        </div>
        <button aria-label="알림 2개" className="ml-4 mr-[10px]">
          <svg width="28" height="28" viewBox="0 0 28 28"><path d="M1 3h17v12h-8l-4 4v-4H1z" fill="#fff" /><path d="M4 6.500h11M4 9h11M4 11.500h8" stroke="#040a12" /><circle cx="17" cy="19" r="8.5" fill="#3a3d42" stroke="#9a9a9a" /><text x="17" y="23.5" textAnchor="middle" fontSize="12" fontWeight="600" fontFamily="Noto Sans, sans-serif" fill="#fff">2</text></svg>
        </button>
        <span className="h-10 w-[5px] border-l border-[#5a5f66]" />
      </div>
    </div>
  );
}

export default function App() {
  return (
    <div className="relative flex h-screen flex-col overflow-hidden font-['Noto_Sans_CJK_KR','Noto_Sans',sans-serif]">
      <TitleBar />
      <div className="shrink-0 bg-[#f3f2f1]">
        <TabRow />
        <Ribbon />
      </div>
      <DocumentArea />
      <StatusBar />
      <Taskbar />
      <SymbolDialog />
    </div>
  );
}
